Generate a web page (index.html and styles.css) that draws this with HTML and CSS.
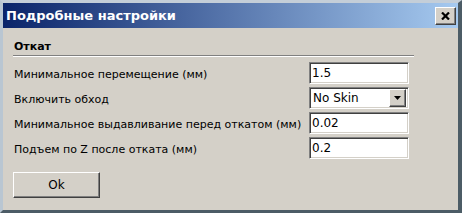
FILE: index.html
```html
<!DOCTYPE html>
<html lang="ru">
<head>
    <meta charset="UTF-8">
    <title>Подробные настройки</title>
    <link rel="stylesheet" href="styles.css">
</head>
<body>

    <div class="window">
        <div class="titlebar">
            <span class="title">Подробные настройки</span>
            <button class="close" type="button" aria-label="Закрыть">
                <svg width="9" height="8" viewBox="0 0 9 8"><path d="M1 0.5L8 7.5M8 0.5L1 7.5" stroke="#000" stroke-width="2.2"/></svg>
            </button>
        </div>

        <div class="content">
            <div class="group-title">Откат</div>

            <div class="rows">
                <label class="label">Минимальное перемещение (мм)</label>
                <input class="field" type="text" value="1.5">

                <label class="label">Включить обход</label>
                <div class="combo">
                    <span class="combo-value">No Skin</span>
                    <span class="combo-btn">
                        <svg width="7" height="4" viewBox="0 0 7 4"><path d="M0 0h7L3.5 4z" fill="#000"/></svg>
                    </span>
                </div>

                <label class="label">Минимальное выдавливание перед откатом (мм)</label>
                <input class="field" type="text" value="0.02">

                <label class="label">Подъем по Z после отката (мм)</label>
                <input class="field" type="text" value="0.2">
            </div>

            <button class="btn" type="button">Ok</button>
        </div>
    </div>

</body>
</html>
```

FILE: styles.css
```css
body {
    margin: 0;
    background: #d4d0c8;
    font-family: "DejaVu Sans", sans-serif;
    font-size: 11px;
    color: #000;
}
.window {
    box-sizing: border-box;
    width: 462px;
    height: 213px;
    background: #d4d0c8;
    border-left: 3px solid #b9c6d2;
    border-top: 3px solid #c4ced8;
    border-right: 4px solid #4c5c66;
    border-bottom: 3px solid #4c5c66;
}
.titlebar {
    display: flex;
    align-items: center;
    justify-content: space-between;
    height: 25px;
    padding: 0 2px 0 3px;
    background: linear-gradient(to right, #0a246a, #a6caf0);
}
.title {
    color: #fff;
    font-weight: bold;
    font-size: 13px;
}
.close {
    display: flex;
    align-items: center;
    justify-content: center;
    width: 21px;
    height: 18px;
    padding: 0;
    margin-top: 1px;
    background: #d4d0c8;
    border: 1px solid;
    border-color: #fff #404040 #404040 #fff;
    box-shadow: inset -1px -1px #808080;
}
.content {
    padding: 0 0 0 10px;
}
.group-title {
    width: 400px;
    margin-top: 12px;
    padding: 0 0 2px 1px;
    font-weight: bold;
    border-bottom: 1px solid #808080;
    box-shadow: 0 1px #fff;
}
.rows {
    display: grid;
    grid-template-columns: 1fr 100px;
    grid-auto-rows: 22px;
    row-gap: 3px;
    width: 396px;
    margin-top: 6px;
    align-items: center;
}
.label {
    padding-left: 1px;
    padding-top: 2px;
}
.field {
    box-sizing: border-box;
    width: 100px;
    height: 22px;
    margin: 0;
    padding: 0 2px;
    font-family: "DejaVu Sans", sans-serif;
    font-size: 12px;
    background: #fff;
    border: 1px solid;
    border-color: #808080 #fff #fff #808080;
    box-shadow: inset 1px 1px #404040, inset -1px -1px #d4d0c8;
    outline: none;
}
.combo {
    box-sizing: border-box;
    display: flex;
    align-items: center;
    justify-content: space-between;
    width: 100px;
    height: 22px;
    padding: 2px 2px 2px 3px;
    font-size: 12px;
    background: #fff;
    border: 1px solid;
    border-color: #808080 #fff #fff #808080;
    box-shadow: inset 1px 1px #404040, inset -1px -1px #d4d0c8;
}
.combo-btn {
    box-sizing: border-box;
    display: flex;
    align-items: center;
    justify-content: center;
    width: 17px;
    height: 18px;
    background: #d4d0c8;
    border: 1px solid;
    border-color: #fff #404040 #404040 #fff;
    box-shadow: inset -1px -1px #808080;
}
.btn {
    display: block;
    width: 87px;
    height: 26px;
    margin-top: 13px;
    font-family: "DejaVu Sans", sans-serif;
    font-size: 12px;
    color: #000;
    background: #d4d0c8;
    border: 1px solid;
    border-color: #fff #404040 #404040 #fff;
    box-shadow: inset -1px -1px #808080;
}
```
